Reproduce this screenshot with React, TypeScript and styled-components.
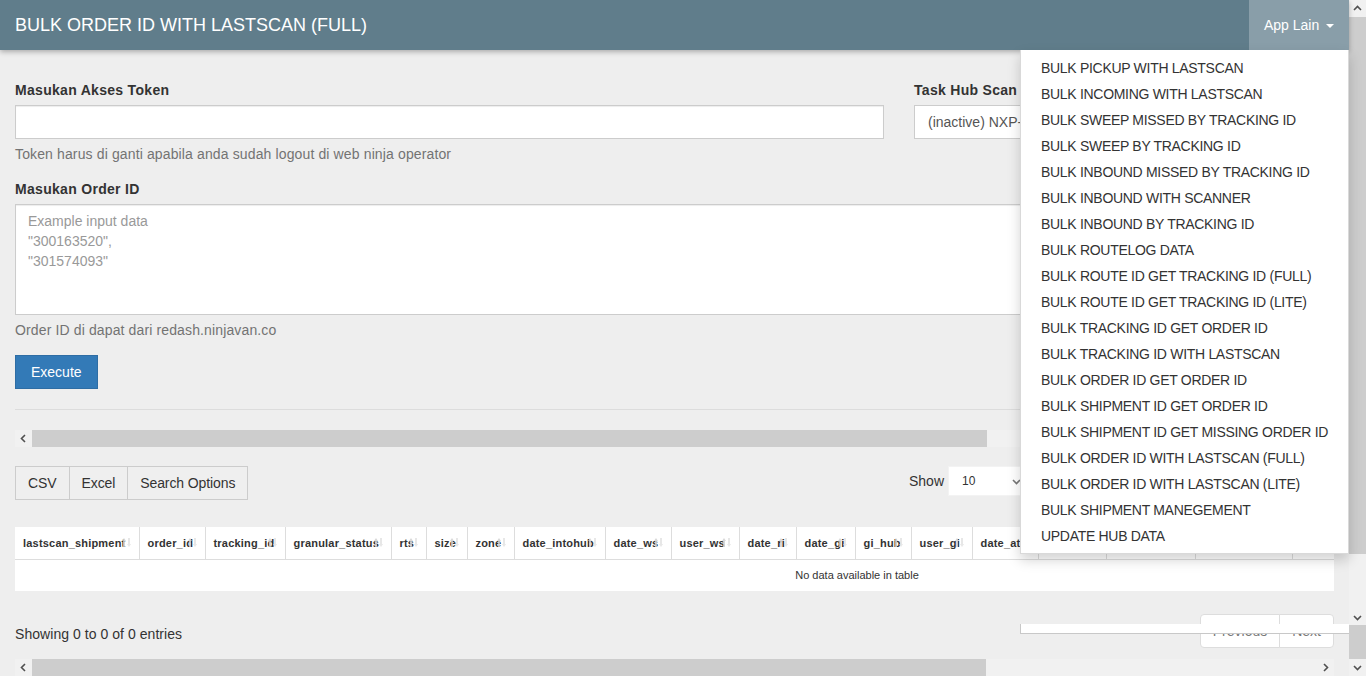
import React from "react";
import styled, { createGlobalStyle } from "styled-components";

const GlobalStyle = createGlobalStyle`
  html, body { margin: 0; padding: 0; }
  body {
    background: #eeeeee;
    font-family: "Liberation Sans", Arial, Helvetica, sans-serif;
    font-size: 14px;
    line-height: 20px;
    color: #333333;
    overflow: hidden;
  }
  * { box-sizing: border-box; }
`;

const Page = styled.div`
  display: flex;
  width: 1366px;
  height: 676px;
  overflow: hidden;
`;

const Main = styled.div`
  width: 1349px;
  flex: none;
  display: flex;
  flex-direction: column;
  min-height: 0;
`;

/* ---------- top bar ---------- */

const Navbar = styled.header`
  height: 50px;
  flex: none;
  background: #607d8b;
  display: flex;
  justify-content: space-between;
  box-shadow: 0 2px 5px rgba(0, 0, 0, 0.28);
  position: relative;
  z-index: 10;
`;

const Brand = styled.div`
  padding: 0 15px;
  font-size: 18px;
  line-height: 50px;
  color: #ffffff;
`;

const NavMenu = styled.div`
  position: relative;
`;

const NavToggle = styled.button`
  height: 50px;
  width: 100px;
  border: 0;
  margin: 0;
  background: #899ea9;
  color: #ffffff;
  font: inherit;
  font-size: 14px;
  white-space: nowrap;
  display: flex;
  align-items: center;
  justify-content: flex-start;
  gap: 7px;
  padding: 0 0 0 15px;
  cursor: pointer;
`;

const Caret = styled.span`
  width: 0;
  height: 0;
  margin-top: 1px;
  border-top: 4px solid #ffffff;
  border-left: 4px solid transparent;
  border-right: 4px solid transparent;
`;

const Dropdown = styled.ul`
  position: absolute;
  top: 50px;
  right: 0;
  width: 329px;
  margin: 0;
  padding: 5px 0 4px;
  list-style: none;
  background: #ffffff;
  border: 1px solid rgba(0, 0, 0, 0.15);
  border-top: 0;
  box-shadow: 0 6px 12px rgba(0, 0, 0, 0.175);
`;

const MenuItem = styled.li`
  padding: 3px 20px;
  line-height: 20px;
  white-space: nowrap;
  color: #333333;
  font-size: 14px;
  letter-spacing: -0.3px;
`;

const MenuTail = styled.div`
  position: absolute;
  top: 624px;
  right: 0;
  width: 329px;
  height: 10px;
  background: #ffffff;
  border-left: 1px solid #c8c8c8;
  border-bottom: 1px solid #c8c8c8;
`;

/* ---------- form ---------- */

const Content = styled.main`
  flex: 1;
  min-height: 0;
  padding: 30px 15px 0;
  display: flex;
  flex-direction: column;
`;

const FormRow = styled.div`
  display: grid;
  grid-template-columns: 869px 1fr;
  column-gap: 30px;
`;

const Field = styled.div<{ $gapTop?: number }>`
  display: flex;
  flex-direction: column;
  margin-top: ${(p) => p.$gapTop ?? 0}px;
`;

const Label = styled.label`
  font-weight: bold;
  line-height: 20px;
  margin-bottom: 5px;
  letter-spacing: 0.3px;
`;

const TextInput = styled.input`
  height: 34px;
  border: 1px solid #cccccc;
  background: #ffffff;
  padding: 6px 12px;
  font: inherit;
  color: #555555;
  box-shadow: inset 0 1px 1px rgba(0, 0, 0, 0.075);
  outline: none;
`;

const SelectBox = styled.div`
  height: 34px;
  border: 1px solid #cccccc;
  background: #ffffff;
  padding: 6px 13px;
  color: #555555;
  white-space: nowrap;
  overflow: hidden;
`;

const TextArea = styled.textarea`
  height: 111px;
  border: 1px solid #cccccc;
  background: #ffffff;
  padding: 6px 12px;
  font: inherit;
  line-height: 20px;
  resize: none;
  outline: none;
  box-shadow: inset 0 1px 1px rgba(0, 0, 0, 0.075);
  &::placeholder {
    color: #999999;
  }
`;

const HelpText = styled.span`
  margin-top: 5px;
  color: #737373;
  line-height: 20px;
  letter-spacing: 0.13px;
`;

const ExecuteButton = styled.button`
  align-self: flex-start;
  margin-top: 15px;
  height: 34px;
  padding: 6px 15px;
  background: #337ab7;
  border: 1px solid #2e6da4;
  color: #ffffff;
  font: inherit;
  cursor: pointer;
`;

const Divider = styled.hr`
  margin: 20px 0 0;
  border: 0;
  border-top: 1px solid #dcdcdc;
  height: 0;
`;

/* ---------- scrollbars ---------- */

const HScroll = styled.div<{ $top: number }>`
  flex: none;
  margin-top: ${(p) => p.$top}px;
  height: 17px;
  display: flex;
  background: #f1f1f1;
`;

const ScrollArrow = styled.div<{ $h?: number }>`
  width: 17px;
  height: ${(p) => p.$h ?? 17}px;
  flex: none;
  display: flex;
  align-items: center;
  justify-content: center;
  background: #f1f1f1;
`;

const HThumb = styled.div<{ $w: number }>`
  width: ${(p) => p.$w}px;
  flex: none;
  background: #cdcdcd;
`;

const Spacer = styled.div`
  flex: 1;
`;

const VScroll = styled.aside`
  width: 17px;
  flex: none;
  display: flex;
  flex-direction: column;
  background: #f1f1f1;
`;

const VThumb = styled.div<{ $h: number }>`
  height: ${(p) => p.$h}px;
  flex: none;
  background: #cdcdcd;
`;

const VTrack = styled.div<{ $h: number }>`
  height: ${(p) => p.$h}px;
  flex: none;
`;

type Dir = "up" | "down" | "left" | "right";

const ARROW_POINTS: Record<Dir, string> = {
  up: "1,6 4.5,2.5 8,6",
  down: "1,3 4.5,6.5 8,3",
  left: "6,1 2.5,4.5 6,8",
  right: "3,1 6.5,4.5 3,8",
};

const Chevron = ({ dir, color = "#505050" }: { dir: Dir; color?: string }) => (
  <svg width="9" height="9" viewBox="0 0 9 9">
    <polyline
      points={ARROW_POINTS[dir]}
      fill="none"
      stroke={color}
      strokeWidth="1.6"
    />
  </svg>
);

/* ---------- table toolbar ---------- */

const Toolbar = styled.div`
  margin-top: 19px;
  display: flex;
  justify-content: space-between;
  align-items: flex-start;
`;

const ButtonGroup = styled.div`
  display: flex;
`;

const ToolButton = styled.button`
  height: 34px;
  padding: 6px 12px;
  border: 1px solid #cccccc;
  background: #efefef;
  color: #333333;
  font: inherit;
  letter-spacing: -0.1px;
  & + & {
    margin-left: -1px;
  }
`;

const Filters = styled.div`
  display: flex;
  align-items: center;
  gap: 106px;
`;

const LengthControl = styled.div`
  display: flex;
  align-items: center;
  gap: 4px;
`;

const LengthSelect = styled.div`
  width: 80px;
  height: 30px;
  background: #ffffff;
  border: 1px solid #f3f3f3;
  padding: 0 6px 0 13px;
  display: flex;
  align-items: center;
  justify-content: space-between;
  font-size: 12px;
`;

const SearchInput = styled.div`
  width: 200px;
  height: 30px;
  background: #ffffff;
  border: 1px solid #cccccc;
`;

/* ---------- table ---------- */

const TableWrap = styled.div`
  margin-top: 27px;
  width: 1319px;
  overflow: hidden;
  flex: none;
`;

const Table = styled.table`
  width: 1684px;
  table-layout: fixed;
  border-collapse: collapse;
  background: #ffffff;
`;

const HeadCell = styled.th<{ $w: number }>`
  width: ${(p) => p.$w}px;
  height: 32px;
  padding: 0 8px;
  text-align: left;
  font-size: 11px;
  font-weight: bold;
  letter-spacing: 0.2px;
  color: #333333;
  white-space: nowrap;
  border-right: 1px solid #dddddd;
  border-bottom: 1px solid #dddddd;
  position: relative;
  overflow: hidden;
`;

const SortMark = styled.svg`
  position: absolute;
  right: 8px;
  top: 10px;
  opacity: 0.8;
`;

const EmptyCell = styled.td`
  height: 32px;
  text-align: center;
  font-size: 11px;
  color: #333333;
  padding: 0 8px;
`;

const SortIcon = () => (
  <SortMark width="9" height="11" viewBox="0 0 9 11">
    <path d="M2 1 L4 4 L3 4 L3 10 L1 10 L1 4 L0 4 Z" fill="#cfcfcf" />
    <path d="M7 10 L9 7 L8 7 L8 1 L6 1 L6 7 L5 7 Z" fill="#e2e2e2" />
  </SortMark>
);

/* ---------- footer ---------- */

const FooterRow = styled.div`
  margin-top: 23px;
  display: flex;
  justify-content: space-between;
  align-items: flex-start;
`;

const Info = styled.div`
  padding-top: 10px;
  line-height: 20px;
  letter-spacing: 0.05px;
`;

const Pager = styled.div`
  display: flex;
`;

const PageButton = styled.span`
  height: 34px;
  padding: 6px 12px;
  background: #ffffff;
  border: 1px solid #dddddd;
  color: #777777;
  &:first-child {
    border-radius: 4px 0 0 4px;
  }
  &:last-child {
    border-radius: 0 4px 4px 0;
    margin-left: -1px;
  }
`;

const MENU_ITEMS = [
  "BULK PICKUP WITH LASTSCAN",
  "BULK INCOMING WITH LASTSCAN",
  "BULK SWEEP MISSED BY TRACKING ID",
  "BULK SWEEP BY TRACKING ID",
  "BULK INBOUND MISSED BY TRACKING ID",
  "BULK INBOUND WITH SCANNER",
  "BULK INBOUND BY TRACKING ID",
  "BULK ROUTELOG DATA",
  "BULK ROUTE ID GET TRACKING ID (FULL)",
  "BULK ROUTE ID GET TRACKING ID (LITE)",
  "BULK TRACKING ID GET ORDER ID",
  "BULK TRACKING ID WITH LASTSCAN",
  "BULK ORDER ID GET ORDER ID",
  "BULK SHIPMENT ID GET ORDER ID",
  "BULK SHIPMENT ID GET MISSING ORDER ID",
  "BULK ORDER ID WITH LASTSCAN (FULL)",
  "BULK ORDER ID WITH LASTSCAN (LITE)",
  "BULK SHIPMENT MANEGEMENT",
  "UPDATE HUB DATA",
];

const COLUMNS: [string, number][] = [
  ["lastscan_shipment", 124],
  ["order_id", 66],
  ["tracking_id", 80],
  ["granular_status", 106],
  ["rts", 35],
  ["size", 41],
  ["zone", 47],
  ["date_intohub", 91],
  ["date_ws", 66],
  ["user_ws", 68],
  ["date_ri", 57],
  ["date_gi", 59],
  ["gi_hub", 56],
  ["user_gi", 61],
  ["date_atl", 66],
  ["user_atl", 68],
  ["date_pod_rts", 89],
  ["user_pod_status", 97],
  ["last_hub_name", 100],
  ["last_scan_type", 105],
  ["last_scan_date", 102],
  ["last_scan_user", 100],
];

export default function App() {
  return (
    <>
      <GlobalStyle />
      <Page>
        <Main>
          <Navbar>
            <Brand>BULK ORDER ID WITH LASTSCAN (FULL)</Brand>
            <NavMenu>
              <NavToggle>
                App Lain <Caret />
              </NavToggle>
              <Dropdown>
                {MENU_ITEMS.map((item) => (
                  <MenuItem key={item}>{item}</MenuItem>
                ))}
              </Dropdown>
              <MenuTail />
            </NavMenu>
          </Navbar>

          <Content>
            <FormRow>
              <Field>
                <Label>Masukan Akses Token</Label>
                <TextInput type="text" />
                <HelpText>
                  Token harus di ganti apabila anda sudah logout di web ninja operator
                </HelpText>
              </Field>
              <Field>
                <Label>Task Hub Scan</Label>
                <SelectBox>(inactive) NXP-JKT</SelectBox>
              </Field>
            </FormRow>

            <Field $gapTop={15}>
              <Label>Masukan Order ID</Label>
              <TextArea
                placeholder={'Example input data\n"300163520",\n"301574093"'}
              />
              <HelpText>Order ID di dapat dari redash.ninjavan.co</HelpText>
            </Field>

            <ExecuteButton>Execute</ExecuteButton>
            <Divider />

            <HScroll $top={20}>
              <ScrollArrow>
                <Chevron dir="left" />
              </ScrollArrow>
              <HThumb $w={955} />
              <Spacer />
              <ScrollArrow>
                <Chevron dir="right" />
              </ScrollArrow>
            </HScroll>

            <Toolbar>
              <ButtonGroup>
                <ToolButton>CSV</ToolButton>
                <ToolButton>Excel</ToolButton>
                <ToolButton>Search Options</ToolButton>
              </ButtonGroup>
              <Filters>
                <LengthControl>
                  Show
                  <LengthSelect>
                    10
                    <Chevron dir="down" color="#777777" />
                  </LengthSelect>
                </LengthControl>
                <SearchInput />
              </Filters>
            </Toolbar>

            <TableWrap>
              <Table>
                <thead>
                  <tr>
                    {COLUMNS.map(([name, w]) => (
                      <HeadCell key={name} $w={w}>
                        {name}
                        <SortIcon />
                      </HeadCell>
                    ))}
                  </tr>
                </thead>
                <tbody>
                  <tr>
                    <EmptyCell colSpan={COLUMNS.length}>
                      No data available in table
                    </EmptyCell>
                  </tr>
                </tbody>
              </Table>
            </TableWrap>

            <FooterRow>
              <Info>Showing 0 to 0 of 0 entries</Info>
              <Pager>
                <PageButton>Previous</PageButton>
                <PageButton>Next</PageButton>
              </Pager>
            </FooterRow>

            <HScroll $top={11}>
              <ScrollArrow>
                <Chevron dir="left" />
              </ScrollArrow>
              <HThumb $w={954} />
              <Spacer />
              <ScrollArrow>
                <Chevron dir="right" />
              </ScrollArrow>
            </HScroll>
          </Content>
        </Main>

        <VScroll>
          <ScrollArrow>
            <Chevron dir="up" />
          </ScrollArrow>
          <VThumb $h={537} />
          <VTrack $h={55} />
          <ScrollArrow $h={16}>
            <Chevron dir="down" />
          </ScrollArrow>
          <VThumb $h={34} />
          <ScrollArrow>
            <Chevron dir="down" />
          </ScrollArrow>
        </VScroll>
      </Page>
    </>
  );
}
